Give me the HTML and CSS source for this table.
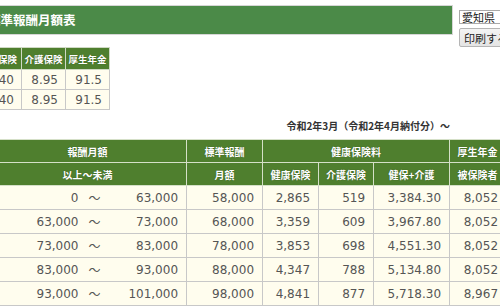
FILE: index.html
```html
<!DOCTYPE html>
<html lang="ja">
<head>
<meta charset="utf-8">
<title>標準報酬月額表</title>
<link rel="stylesheet" href="styles.css">
</head>
<body>
<div class="page">
  <div class="top">
    <div class="main-col">
      <h1 class="titlebar">標準報酬月額表</h1>
      <table class="rates">
        <tr><th class="r1">健康保険</th><th class="r2">介護保険</th><th class="r3">厚生年金</th></tr>
        <tr><td>49.40</td><td>8.95</td><td>91.5</td></tr>
        <tr><td>49.40</td><td>8.95</td><td>91.5</td></tr>
      </table>
    </div>
    <div class="controls">
      <select class="pref"><option>愛知県</option></select>
      <button class="print">印刷する</button>
    </div>
  </div>
  <p class="caption">令和2年3月（令和2年4月納付分）～</p>
  <table class="grade">
    <colgroup>
      <col class="c-from"><col class="c-tilde"><col class="c-to"><col class="c-std"><col class="c-hi"><col class="c-ci"><col class="c-sum"><col class="c-pen">
    </colgroup>
    <tr><th colspan="3">報酬月額</th><th>標準報酬</th><th colspan="3">健康保険料</th><th>厚生年金</th></tr>
    <tr><th colspan="3">以上～未満</th><th>月額</th><th>健康保険</th><th>介護保険</th><th>健保+介護</th><th>被保険者</th></tr>
    <tr><td>0</td><td class="t">～</td><td>63,000</td><td>58,000</td><td>2,865</td><td>519</td><td>3,384.30</td><td>8,052</td></tr>
    <tr><td>63,000</td><td class="t">～</td><td>73,000</td><td>68,000</td><td>3,359</td><td>609</td><td>3,967.80</td><td>8,052</td></tr>
    <tr><td>73,000</td><td class="t">～</td><td>83,000</td><td>78,000</td><td>3,853</td><td>698</td><td>4,551.30</td><td>8,052</td></tr>
    <tr><td>83,000</td><td class="t">～</td><td>93,000</td><td>88,000</td><td>4,347</td><td>788</td><td>5,134.80</td><td>8,052</td></tr>
    <tr><td>93,000</td><td class="t">～</td><td>101,000</td><td>98,000</td><td>4,841</td><td>877</td><td>5,718.30</td><td>8,967</td></tr>
  </table>
</div>
</body>
</html>
```
FILE: styles.css
```css
html, body {
  margin: 0;
  padding: 0;
  overflow: hidden;
  background: #fff;
}
body {
  font-family: "DejaVu Sans", "Noto Sans CJK JP", sans-serif;
  color: #555;
}
.page {
  margin-left: -30px;
  width: 600px;
}
.top {
  display: flex;
  align-items: flex-start;
}
.main-col {
  width: 483px;
  flex: none;
}
.titlebar {
  margin: 5px 0 12px 0;
  height: 28px;
  box-sizing: content-box;
  border: 1px solid #d6d6d6;
  background: #4b8a48;
  color: #fff;
  font-family: "Noto Sans CJK JP", sans-serif;
  font-size: 12.5px;
  font-weight: bold;
  line-height: 28px;
  padding-left: 17px;
}
.rates {
  border-collapse: collapse;
  margin-left: 4px;
  background: #fffdee;
}
.rates th {
  background: #4f7f2e;
  color: #fff;
  font-family: "Noto Sans CJK JP", sans-serif;
  font-size: 9.5px;
  font-weight: bold;
  height: 21px;
  padding: 0 1px;
  border: 1px solid #cfd9c4;
  text-shadow: 0 0 1px #2c4a18;
}
.rates th.r1 { width: 44px; }
.rates th.r2 { width: 41px; }
.rates th.r3 { width: 41px; }
.rates td {
  border: 1px solid #c8c8c8;
  height: 19px;
  padding: 0 7px 0 0;
  font-size: 12px;
  text-align: right;
}
.controls {
  margin-left: 6px;
  margin-top: 10px;
  display: flex;
  flex-direction: column;
  align-items: flex-start;
  gap: 4px;
}
.pref {
  appearance: none;
  -webkit-appearance: none;
  width: 70px;
  height: 14px;
  box-sizing: border-box;
  font-family: "Noto Sans CJK JP", sans-serif;
  font-size: 11px;
  line-height: 12px;
  border: 1px solid #a9a9a9;
  border-radius: 0;
  padding: 0 2px;
  background: #fff;
  color: #222;
}
.print {
  height: 19px;
  font-family: "Noto Sans CJK JP", sans-serif;
  font-size: 11px;
  padding: 0 4px;
  border: 1px solid #b5b5b5;
  border-radius: 2px;
  background: linear-gradient(#f4f4f4, #e4e4e4);
  color: #222;
  line-height: 16px;
  white-space: nowrap;
}
.caption {
  margin: 8px 0 5px 0;
  width: 480px;
  text-align: right;
  font-family: "Noto Sans CJK JP", sans-serif;
  font-size: 10px;
  font-weight: bold;
  line-height: 16px;
  color: #333;
}
.grade {
  border-collapse: collapse;
  table-layout: fixed;
  margin-left: 18px;
  width: 517px;
  background: #fffdee;
}
.c-from { width: 96px; }
.c-tilde { width: 20px; }
.c-to { width: 82px; }
.c-std { width: 76px; }
.c-hi { width: 56px; }
.c-ci { width: 55px; }
.c-sum { width: 76px; }
.c-pen { width: 56px; }
.grade th {
  background: #4f7f2e;
  color: #fff;
  font-family: "Noto Sans CJK JP", sans-serif;
  font-size: 10px;
  font-weight: bold;
  height: 22px;
  padding: 0;
  border: 1px solid #d5e0c8;
  text-shadow: 0 0 1px #2c4a18;
  white-space: nowrap;
}
.grade td {
  height: 23px;
  padding: 0 8px 0 0;
  font-size: 12px;
  text-align: right;
  border: 1px solid #c8c8c8;
  white-space: nowrap;
}
.grade td:last-child {
  padding-right: 7px;
}
.grade td:first-child {
  border-right: none;
  padding-right: 6px;
}
.grade td.t {
  text-align: center;
  padding: 0;
  border-left: none;
  border-right: none;
  font-family: "Noto Sans CJK JP", sans-serif;
}
.grade td.t + td {
  border-left: none;
}
```
